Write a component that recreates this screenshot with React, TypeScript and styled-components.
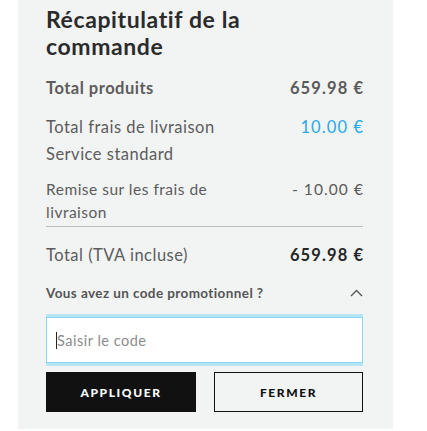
import React from "react";
import styled, { createGlobalStyle } from "styled-components";

const FONT = `Lato, "Liberation Sans", sans-serif`;

const Global = createGlobalStyle`
  html, body { margin: 0; padding: 0; background: #ffffff; }
  body { font-family: ${FONT}; }
  * { box-sizing: border-box; }
`;

const Panel = styled.section`
  margin-left: 18px;
  width: 375px;
  background: #f2f3f3;
  padding: 6px 30px 17px 28px;
  display: flex;
  flex-direction: column;
`;

const Title = styled.h2`
  margin: 0;
  font-size: 23px;
  line-height: 27px;
  font-weight: 700;
  letter-spacing: 0.6px;
  color: #2b2b2b;
`;

const Row = styled.div<{ $top: number; $size?: number; $lh?: number }>`
  margin-top: ${(p) => p.$top}px;
  display: flex;
  justify-content: space-between;
  align-items: flex-start;
  font-size: ${(p) => p.$size ?? 16.5}px;
  line-height: ${(p) => p.$lh ?? 27}px;
  letter-spacing: 0.5px;
  color: #5c5c5c;
`;

const Label = styled.div<{ $bold?: boolean; $width?: number }>`
  font-weight: ${(p) => (p.$bold ? 700 : 400)};
  max-width: ${(p) => (p.$width ? `${p.$width}px` : "none")};
`;

const Value = styled.div<{ $tone?: "muted" | "blue" | "dark"; $bold?: boolean }>`
  font-weight: ${(p) => (p.$bold ? 700 : 400)};
  letter-spacing: 1.1px;
  margin-right: -1.1px;
  white-space: nowrap;
  color: ${(p) =>
    p.$tone === "blue" ? "#25abeb" : p.$tone === "dark" ? "#262626" : "#5a5a5a"};
`;

const Divided = styled.div`
  padding-bottom: 2px;
  border-bottom: 1px solid #bdbdbd;
`;

const PromoHeader = styled.div`
  margin-top: 14px;
  display: flex;
  justify-content: space-between;
  align-items: center;
  font-size: 13.5px;
  line-height: 20px;
  font-weight: 700;
  letter-spacing: 0.4px;
  color: #555555;
`;

const InputWrap = styled.div`
  position: relative;
  margin-top: 14px;
`;

const CodeInput = styled.input`
  display: block;
  width: 100%;
  height: 46px;
  border: 1px solid #86d8f6;
  box-shadow: 0 -3px 0 #b8e5f4, 0 3px 0 #b8e5f4;
  background: #ffffff;
  padding: 0 10px;
  font-family: ${FONT};
  font-size: 14.5px;
  letter-spacing: 0.5px;
  color: #333;
  outline: none;
  &::placeholder {
    color: #8c8c8c;
  }
`;

const Caret = styled.span`
  position: absolute;
  left: 10px;
  top: 15px;
  width: 1px;
  height: 17px;
  background: #222;
`;

const Buttons = styled.div`
  margin-top: 9px;
  display: grid;
  grid-template-columns: 150px 149px;
  column-gap: 18px;
`;

const Button = styled.button<{ $primary?: boolean }>`
  height: 40px;
  border: ${(p) => (p.$primary ? "none" : "1.5px solid #111")};
  background: ${(p) => (p.$primary ? "#111111" : "transparent")};
  color: ${(p) => (p.$primary ? "#ffffff" : "#111111")};
  font-family: ${FONT};
  font-size: 12px;
  font-weight: 900;
  letter-spacing: 1.6px;
  text-transform: uppercase;
  padding: 0;
  cursor: pointer;
`;

const Chevron = () => (
  <svg width="13" height="8" viewBox="0 0 13 8" fill="none">
    <path d="M1 7 L6.5 1.5 L12 7" stroke="#555" strokeWidth="1.4" />
  </svg>
);

export default function App() {
  return (
    <>
      <Global />
      <Panel>
        <Title>
          Récapitulatif de la
          <br />
          commande
        </Title>
        <Row $top={15}>
          <Label $bold>Total produits</Label>
          <Value $bold>659.98 €</Value>
        </Row>
        <Row $top={12}>
          <Label>
            Total frais de livraison
            <br />
            Service standard
          </Label>
          <Value $tone="blue">10.00 €</Value>
        </Row>
        <Divided>
          <Row $top={10} $size={15.5} $lh={23}>
            <Label $width={200}>Remise sur les frais de livraison</Label>
            <Value>- 10.00 €</Value>
          </Row>
        </Divided>
        <Row $top={15}>
          <Label>Total (TVA incluse)</Label>
          <Value $bold $tone="dark">
            659.98 €
          </Value>
        </Row>
        <PromoHeader>
          <span>Vous avez un code promotionnel ?</span>
          <Chevron />
        </PromoHeader>
        <InputWrap>
          <CodeInput placeholder="Saisir le code" />
          <Caret />
        </InputWrap>
        <Buttons>
          <Button $primary>Appliquer</Button>
          <Button>Fermer</Button>
        </Buttons>
      </Panel>
    </>
  );
}
